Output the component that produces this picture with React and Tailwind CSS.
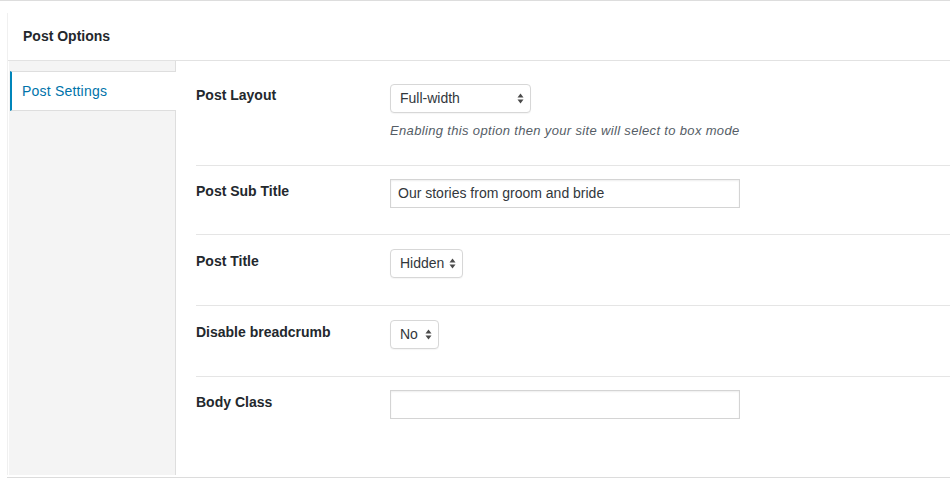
import React from "react";

function Arrows() {
  return (
    <svg width="7" height="11" viewBox="0 0 7 11" className="shrink-0">
      <path d="M3.5 0.5 L6.5 4.5 L0.5 4.5 Z" fill="#4a4a4a" />
      <path d="M3.5 10.5 L6.5 6.5 L0.5 6.5 Z" fill="#4a4a4a" />
    </svg>
  );
}

function Select({ label, width }) {
  return (
    <div
      className={`flex h-[29px] items-center justify-between rounded-[4px] border border-[#d7d7d7] bg-white pl-[9px] pr-[6px] text-[14px] text-[#32373c] shadow-[0_1px_1px_rgba(0,0,0,0.04)] ${width}`}
    >
      <span>{label}</span>
      <Arrows />
    </div>
  );
}

function TextInput({ value }) {
  return (
    <div className="flex h-[29px] w-[350px] items-center border border-[#d4d4d4] bg-white px-[7px] text-[14px] text-[#32373c] shadow-[inset_0_1px_2px_rgba(0,0,0,0.07)]">
      {value}
    </div>
  );
}

function Row({ label, children, className = "", labelPad = "pt-[2px]", last = false }) {
  return (
    <div
      className={`ml-[20px] flex ${last ? "" : "border-b border-[#e5e5e5]"} ${className}`}
    >
      <div className={`w-[194px] shrink-0 text-[14px] font-bold leading-[20px] text-[#23282d] ${labelPad}`}>
        {label}
      </div>
      <div className="flex flex-col">{children}</div>
    </div>
  );
}

export default function App() {
  return (
    <div
      className="h-[478px] w-[950px] overflow-hidden border-t border-[#dddddd] bg-white"
      style={{ fontFamily: '"Liberation Sans", Arial, sans-serif' }}
    >
      <div className="ml-[7px] mt-[12px] border-b border-[#dcdcdc] pb-[2px]">
        <div className="border-l border-[#f0f0f0]">
          <div className="flex h-[48px] items-center border-b border-[#e2e2e2] pl-[15px] text-[14px] font-bold text-[#23282d]">
            Post Options
          </div>
          <div className="flex">
            <div className="ml-[1px] w-[167px] shrink-0 border-r border-[#dedede] bg-[#f4f4f4] pt-[10px]">
              <div className="relative -mr-[1px] ml-[1px] flex h-[40px] items-center border-y border-[#dedede] border-l-2 border-l-[#0085ba] bg-white pl-[10px] text-[14px] tracking-[0.2px] text-[#0073aa]">
                Post Settings
              </div>
            </div>
            <div className="flex-1">
              <Row label="Post Layout" className="pt-[23px] pb-[25px]" labelPad="pt-[1px]">
                <Select label="Full-width" width="w-[141px]" />
                <div className="mt-[9px] text-[13px] italic leading-[18px] tracking-[0.34px] text-[#555d66]">
                  Enabling this option then your site will select to box mode
                </div>
              </Row>
              <Row label="Post Sub Title" className="pt-[13px] pb-[26px]">
                <TextInput value="Our stories from groom and bride" />
              </Row>
              <Row label="Post Title" className="pt-[14px] pb-[27px]">
                <Select label="Hidden" width="w-[73px]" />
              </Row>
              <Row label="Disable breadcrumb" className="pt-[14px] pb-[27px]">
                <Select label="No" width="w-[49px]" />
              </Row>
              <Row label="Body Class" className="pt-[13px] pb-[56px]" last>
                <TextInput value="" />
              </Row>
            </div>
          </div>
        </div>
      </div>
    </div>
  );
}
